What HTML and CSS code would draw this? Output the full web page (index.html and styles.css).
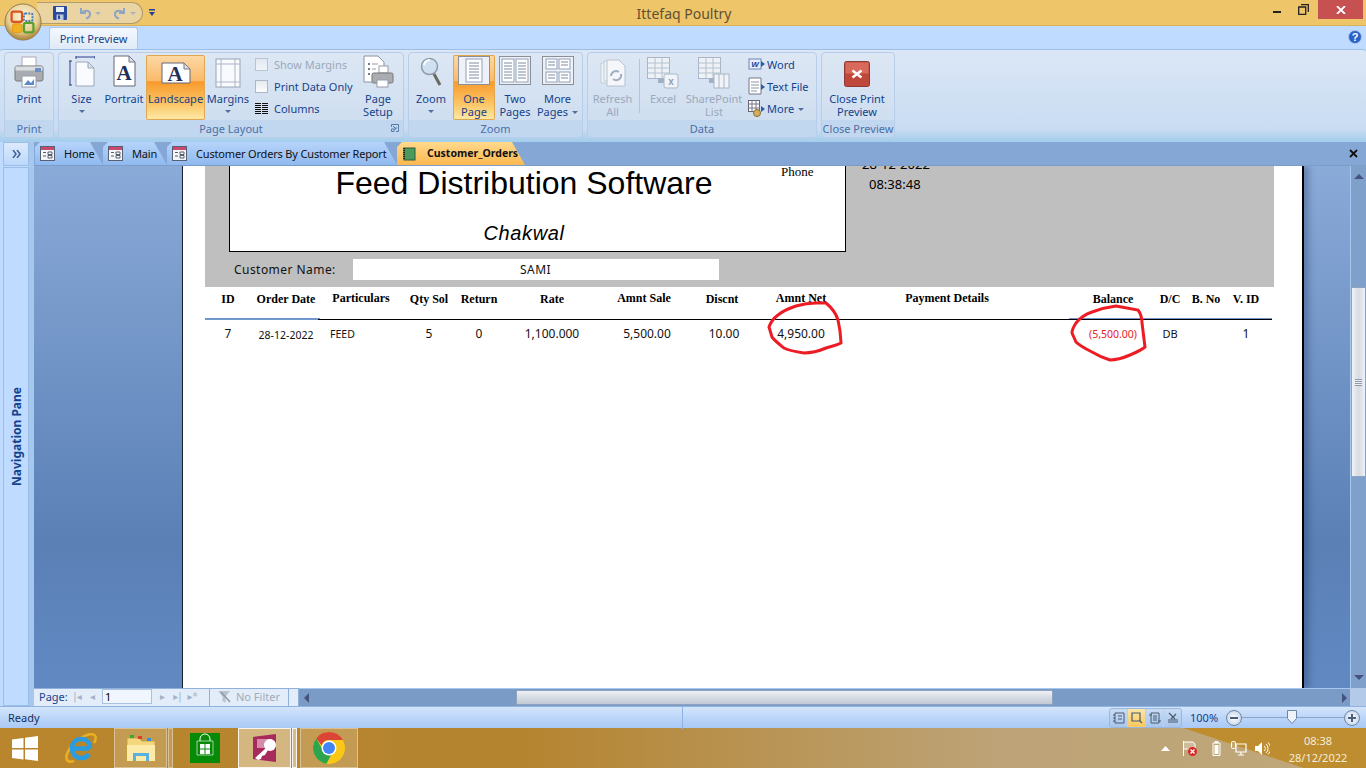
FILE: index.html
```html
<!DOCTYPE html>
<html lang="en">
<head>
<meta charset="utf-8">
<title>Ittefaq Poultry</title>
<link rel="stylesheet" href="styles.css">
</head>
<body>
<div class="app">
  <header class="titlebar">
    <div class="orb">
      <svg viewBox="0 0 40 40" width="38" height="38">
        <defs>
          <radialGradient id="orbg" cx="50%" cy="35%" r="60%"><stop offset="0" stop-color="#fff4d8"/><stop offset=".7" stop-color="#e8cf96"/><stop offset="1" stop-color="#b58f45"/></radialGradient>
        </defs>
        <circle cx="20" cy="20" r="19" fill="url(#orbg)" stroke="#8f7a4d"/>
        <rect x="8" y="9" width="11" height="11" rx="2" fill="none" stroke="#d9541e" stroke-width="2.4"/>
        <rect x="21" y="11" width="9" height="8" rx="1.5" fill="none" stroke="#3f7fc0" stroke-width="2" stroke-dasharray="2 1.2"/>
        <rect x="9" y="22" width="10" height="9" rx="1.5" fill="#f0b020" stroke="#e89a10"/>
        <rect x="21" y="21" width="10" height="10" rx="2" fill="none" stroke="#58a02f" stroke-width="2.4"/>
      </svg>
    </div>
    <div class="qat">
      <svg viewBox="0 0 14 14" width="14" height="14"><rect width="14" height="14" rx="1" fill="#2c4a9c"/><rect x="3" y="1" width="8" height="5" fill="#e8eef8"/><rect x="3.500" y="8.500" width="7" height="5.500" fill="#b9c6dc"/><rect x="5" y="9.500" width="2" height="3.500" fill="#2c4a9c"/></svg>
      <svg class="q-undo" viewBox="0 0 14 14" width="14" height="14"><path d="M3 2v5h5M3.500 7C6 3.500 12 4 12 8c0 2.500-2 4-4 4.500" fill="none" stroke="#8ea4c4" stroke-width="2"/></svg>
      <i class="q-caret"></i>
      <svg class="q-redo" viewBox="0 0 14 14" width="14" height="14"><path d="M11 2v5H6M10.500 7C8 3.500 2 4 2 8c0 2.500 2 4 4 4.500" fill="none" stroke="#8ea4c4" stroke-width="2"/></svg>
      <i class="q-caret"></i>
    </div>
    <svg class="q-more" viewBox="0 0 7 8" width="7" height="8"><path d="M0 0h6v1.500H0zM0 3h6L3 7z" fill="#23448c"/></svg>
    <div class="app-title">Ittefaq Poultry</div>
    <div class="win">
      <i class="w-min"></i>
      <svg class="w-res" viewBox="0 0 11 11" width="11" height="11"><path d="M3 .7h7.300V8M.7 3h7v7.300h-7z" fill="none" stroke="#222" stroke-width="1.300"/></svg>
      <div class="win-close"><svg viewBox="0 0 10 8" width="10" height="8"><path d="M1 0l8 8M9 0L1 8" stroke="#fff" stroke-width="1.800"/></svg></div>
    </div>
  </header>

  <div class="tabstrip">
    <div class="rtab">Print Preview</div>
    <svg class="help" viewBox="0 0 14 14" width="14" height="14"><circle cx="7" cy="7" r="6.500" fill="#2a62c8" stroke="#a8c4ec"/><text x="7" y="11" text-anchor="middle" class="help-q">?</text></svg>
  </div>

  <div class="ribbon">
    <section class="group g-print">
      <div class="g-body">
        <div class="rb w50">
          <div class="ic"><svg viewBox="0 0 30 34" width="30" height="34"><rect x="8" y="2" width="14" height="10" fill="#fff" stroke="#aab"/><rect x="1" y="11" width="28" height="15" rx="2" fill="#a9adb2" stroke="#777"/><rect x="1.500" y="11.500" width="27" height="4" fill="#dcdfe2"/><rect x="21" y="13" width="6" height="4" fill="#6c8fc0"/><rect x="8" y="21" width="14" height="11" fill="#fff" stroke="#99a"/><path d="M10 30l4-5 3 3 3-4v6z" fill="#5c88cc"/></svg></div>
          <span>Print</span>
        </div>
      </div>
      <footer>Print</footer>
    </section>

    <section class="group g-layout">
      <div class="g-body">
        <div class="rb w-size">
          <div class="ic"><svg viewBox="0 0 26 32" width="26" height="32"><path d="M7 1h19M7 0v3M26 0v3M1 5v24M0 5h3M0 29h3" stroke="#2a3f8c" fill="none"/><path d="M7 6h12l6 6v18H7z" fill="#fafbfe" stroke="#9aa7bb"/><path d="M19 6v6h6z" fill="#dde2ea" stroke="#9aa7bb"/></svg></div>
          <span>Size</span><i class="caret"></i>
        </div>
        <div class="rb w-portrait">
          <div class="ic"><svg viewBox="0 0 24 32" width="24" height="32"><path d="M2 1h15l6 6v24H2z" fill="#fff" stroke="#667"/><path d="M17 1v6h6z" fill="#dde2ea" stroke="#778"/><text x="12" y="25" text-anchor="middle" class="big-a">A</text></svg></div>
          <span>Portrait</span>
        </div>
        <div class="rb w-land active">
          <div class="ic"><svg viewBox="0 0 30 24" width="30" height="24"><path d="M1 3h22l6 6v14H1z" fill="#fff" stroke="#667"/><path d="M23 3v6h6z" fill="#dde2ea" stroke="#778"/><text x="14" y="21" text-anchor="middle" class="big-a">A</text></svg></div>
          <span>Landscape</span>
        </div>
        <div class="rb w-margin">
          <div class="ic"><svg viewBox="0 0 26 30" width="26" height="30"><rect x="1" y="1" width="24" height="28" fill="#f8fafe" stroke="#9aa4b4"/><path d="M6 1v28M20 1v28M1 6h24M1 24h24" stroke="#aab6c8" fill="none"/></svg></div>
          <span>Margins</span><i class="caret"></i>
        </div>
        <div class="opts">
          <div class="opt off"><i class="cb"></i><span>Show Margins</span></div>
          <div class="opt"><i class="cb"></i><span>Print Data Only</span></div>
          <div class="opt"><svg class="col-ic" viewBox="0 0 13 11" width="13" height="11"><path d="M0 .5h6M7 .5h6M0 2.500h6M7 2.500h6M0 4.500h6M7 4.500h6M0 6.500h6M7 6.500h6M0 8.500h6M7 8.500h6M0 10.500h6M7 10.500h6" stroke="#111"/></svg><span>Columns</span></div>
        </div>
        <div class="rb w-setup">
          <div class="ic"><svg viewBox="0 0 31 34" width="31" height="34"><path d="M1 1h14l6 6v20H1z" fill="#fff" stroke="#8894a8"/><path d="M5 9h2M5 14h2M5 19h2" stroke="#456" stroke-width="1.500"/><path d="M9 9h6M9 14h4M9 19h4" stroke="#99a"/><rect x="16" y="11" width="9" height="7" fill="#fff" stroke="#99a"/><rect x="9" y="18" width="21" height="10" rx="1.500" fill="#a9adb2" stroke="#777"/><rect x="14" y="25" width="11" height="7" fill="#fff" stroke="#99a"/></svg></div>
          <span>Page<br>Setup</span>
        </div>
      </div>
      <footer>Page Layout<svg class="launch" viewBox="0 0 8 8" width="8" height="8"><path d="M.5 3V.5H7.500V7.500H5M2 2l3 3M5 3v2H3M.5 5h2.500v2.500H.5z" fill="none" stroke="#5b7aa8"/></svg></footer>
    </section>

    <section class="group g-zoom">
      <div class="g-body">
        <div class="rb w-zoom">
          <div class="ic"><svg viewBox="0 0 22 30" width="22" height="30"><circle cx="9.500" cy="9.500" r="8" fill="#cfe0f2" stroke="#8d9aa8" stroke-width="1.500"/><path d="M4 8a6 6 0 0 1 6-5" stroke="#fff" stroke-width="2" fill="none"/><path d="M14 17l6 11" stroke="#6b6a60" stroke-width="3"/></svg></div>
          <span>Zoom</span><i class="caret"></i>
        </div>
        <div class="rb w-one active">
          <div class="ic"><svg viewBox="0 0 32 29" width="32" height="29"><rect x=".5" y=".5" width="31" height="28" fill="#eef2f8" stroke="#8a8f98"/><rect x="8" y="3" width="16" height="23" fill="#fff" stroke="#8fa0b8"/><path d="M11 7h10M11 10h10M11 13h10M11 16h10M11 19h10M11 22h10" stroke="#7f8ba0"/></svg></div>
          <span>One<br>Page</span>
        </div>
        <div class="rb w-two">
          <div class="ic"><svg viewBox="0 0 32 29" width="32" height="29"><rect x=".5" y=".5" width="31" height="28" fill="#eef2f8" stroke="#8a8f98"/><rect x="3" y="3" width="12" height="23" fill="#fff" stroke="#8fa0b8"/><rect x="17" y="3" width="12" height="23" fill="#fff" stroke="#8fa0b8"/><path d="M5 7h8M5 10h8M5 13h8M5 16h8M5 19h8M5 22h8M19 7h8M19 10h8M19 13h8M19 16h8M19 19h8M19 22h8" stroke="#7f8ba0"/></svg></div>
          <span>Two<br>Pages</span>
        </div>
        <div class="rb w-more">
          <div class="ic"><svg viewBox="0 0 32 29" width="32" height="29"><rect x=".5" y=".5" width="31" height="28" fill="#eef2f8" stroke="#8a8f98"/><rect x="4" y="3" width="11" height="10" fill="#fff" stroke="#8fa0b8"/><rect x="17" y="3" width="11" height="10" fill="#fff" stroke="#8fa0b8"/><rect x="4" y="16" width="11" height="10" fill="#fff" stroke="#8fa0b8"/><rect x="17" y="16" width="11" height="10" fill="#fff" stroke="#8fa0b8"/><path d="M6 6h7M6 9h7M19 6h7M19 9h7M6 19h7M6 22h7M19 19h7M19 22h7" stroke="#7f8ba0"/></svg></div>
          <span>More<br>Pages<i class="caret inline"></i></span>
        </div>
      </div>
      <footer>Zoom</footer>
    </section>

    <section class="group g-data">
      <div class="g-body">
        <div class="rb w-refresh off">
          <div class="ic"><svg viewBox="0 0 26 28" width="26" height="28"><path d="M1 4h12v20H1z" fill="#eef2f7" stroke="#c2ccd8"/><path d="M4 2h12v20H4z" fill="#eef2f7" stroke="#c2ccd8"/><path d="M7 1h12l6 6v20H7z" fill="#f4f6fa" stroke="#b8c2d0"/><path d="M11 17a5 5 0 0 1 8-4M21 15a5 5 0 0 1-8 5" fill="none" stroke="#9fb0c4" stroke-width="2"/></svg></div>
          <span>Refresh<br>All</span>
        </div>
        <i class="sep"></i>
        <div class="rb w-excel off">
          <div class="ic"><svg viewBox="0 0 32 32" width="32" height="32"><rect x=".5" y=".5" width="22" height="21" fill="#eef2f7" stroke="#a9b6c6"/><path d="M.5 6h22M.5 11h22M.5 16h22M8 .5v21M15 .5v21" stroke="#b4c0ce"/><path d="M6 19l5 5 0-3h6v5h-6v-2z" fill="#9fb0c4"/><rect x="17" y="17" width="14" height="14" rx="2" fill="#f0f3f7" stroke="#a9b6c6"/><text x="24" y="28" text-anchor="middle" class="mini-x">x</text></svg></div>
          <span>Excel</span>
        </div>
        <div class="rb w-share off">
          <div class="ic"><svg viewBox="0 0 32 32" width="32" height="32"><rect x=".5" y=".5" width="22" height="21" fill="#eef2f7" stroke="#a9b6c6"/><path d="M.5 6h22M.5 11h22M.5 16h22M8 .5v21M15 .5v21" stroke="#b4c0ce"/><path d="M6 19l5 5 0-3h6v5h-6v-2z" fill="#9fb0c4"/><rect x="16" y="17" width="15" height="14" fill="#f0f3f7" stroke="#a9b6c6"/><path d="M21 17v14M26 17v14" stroke="#a9b6c6"/></svg></div>
          <span>SharePoint<br>List</span>
        </div>
        <div class="opts data-opts">
          <div class="opt"><svg class="s-ic" viewBox="0 0 17 14" width="17" height="14"><rect x="1" y="2" width="12" height="10" fill="#e8eefb" stroke="#6d83b8"/><text x="7" y="10" text-anchor="middle" class="mini-w">W</text><path d="M13 4l4 3-4 3z" fill="#2a5ba8"/></svg><span>Word</span></div>
          <div class="opt"><svg class="s-ic" viewBox="0 0 17 18" width="17" height="18"><path d="M1 1h12v16H1z" fill="#fff" stroke="#778"/><path d="M3 5h8M3 8h8M3 11h8M3 14h6" stroke="#8a95a8"/><path d="M13 7l4 3-4 3z" fill="#2a5ba8"/></svg><span>Text File</span></div>
          <div class="opt"><svg class="s-ic" viewBox="0 0 17 17" width="17" height="17"><rect x=".5" y=".5" width="11" height="11" fill="#fff" stroke="#667"/><path d="M.5 4h11M.5 8h11M4 .5v11M8 .5v11" stroke="#778"/><ellipse cx="9" cy="13" rx="3.500" ry="3.500" fill="#d0b060" stroke="#8a7030"/><path d="M13 6l4 3-4 3z" fill="#2a5ba8"/></svg><span>More<i class="caret inline"></i></span></div>
        </div>
      </div>
      <footer>Data</footer>
    </section>

    <section class="group g-close">
      <div class="g-body">
        <div class="rb w-closep">
          <div class="ic"><svg viewBox="0 0 26 26" width="26" height="26"><rect x=".5" y=".5" width="25" height="25" rx="2" fill="#c0483a" stroke="#8c3a34"/><rect x="1.500" y="1.500" width="23" height="11" fill="#d86a5c"/><path d="M8.500 9.500l9 7M17.500 9.500l-9 7" stroke="#fff" stroke-width="2.500"/></svg></div>
          <span>Close Print<br>Preview</span>
        </div>
      </div>
      <footer>Close Preview</footer>
    </section>
  </div>

  <main class="work">
    <aside class="nav">
      <div class="nav-top"><svg viewBox="0 0 9 8" width="9" height="8"><path d="M1 0l3 4-3 4M5 0l3 4-3 4" fill="none" stroke="#3f5f98" stroke-width="1.500"/></svg></div>
      <div class="nav-pane"><span>Navigation Pane</span></div>
    </aside>
    <div class="docs">
      <div class="doctabs">
        <div class="dtab"><svg class="form-ic" viewBox="0 0 15 15" width="15" height="15"><use href="#formicon"/></svg><span>Home</span></div>
        <div class="dtab"><svg class="form-ic" viewBox="0 0 15 15" width="15" height="15"><use href="#formicon"/></svg><span>Main</span></div>
        <div class="dtab wide"><svg class="form-ic" viewBox="0 0 15 15" width="15" height="15"><use href="#formicon"/></svg><span>Customer Orders By Customer Report</span></div>
        <div class="dtab cur"><svg viewBox="0 0 13 14" width="13" height="14"><rect x="1" y="1" width="11" height="12" fill="#4a9a5c" stroke="#2c5c38"/><path d="M1 1v12" stroke="#222" stroke-dasharray="1 1" stroke-width="2"/></svg><span>Customer_Orders</span></div>
        <svg class="doc-x" viewBox="0 0 9 9" width="9" height="9"><path d="M1 1l7 7M8 1L1 8" stroke="#111" stroke-width="1.800"/></svg>
      </div>
      <div class="stage">
        <div class="viewport">
          <div class="page">
            <div class="band">
              <div class="band-top">
                <div class="titlebox">
                  <div class="tb-main">
                    <div class="co-name">Feed Distribution Software</div>
                    <div class="co-city">Chakwal</div>
                  </div>
                  <div class="co-phone">Phone</div>
                </div>
                <div class="stamp">
                  <div class="st-date">28-12-2022</div>
                  <div class="st-time">08:38:48</div>
                </div>
              </div>
              <div class="cust">
                <div class="cust-label">Customer Name:</div>
                <div class="cust-value">SAMI</div>
              </div>
            </div>
            <div class="cols head">
              <div>ID</div><div>Order Date</div><div class="h-up">Particulars</div><div>Qty Sol</div><div>Return</div><div>Rate</div><div class="h-up">Amnt Sale</div><div>Discnt</div><div class="h-up">Amnt Net</div><div class="h-up">Payment Details</div><div></div><div>Balance</div><div>D/C</div><div>B. No</div><div>V. ID</div>
            </div>
            <div class="rule"></div>
            <div class="cols row">
              <div>7</div><div class="c-date">28-12-2022</div><div class="c-part">FEED</div><div>5</div><div>0</div><div>1,100.000</div><div class="c-sale">5,500.00</div><div class="c-disc">10.00</div><div>4,950.00</div><div></div><div></div><div class="c-neg">(5,500.00)</div><div class="c-dc">DB</div><div></div><div>1</div>
            </div>
            <svg class="ring ring-net" viewBox="766 300 78 56" width="78" height="56"><path d="M826 303C832 308 836 313 838 320L840 331L841 343C836 346 831 346 826 348C819 351 811 353 804 353C797 352 790 351 784 348C779 344 775 341 772 337L769 327C771 321 774 318 778 315C783 311 790 308 796 306C803 304 810 303 816 303z" fill="none" stroke="#ed1c24" stroke-width="3"/></svg>
            <svg class="ring ring-bal" viewBox="1069 303 79 59" width="79" height="59"><path d="M1116 306L1138 310C1141 314 1142 319 1142 323L1145 347C1140 351 1135 353 1130 355C1123 358 1116 360 1110 360C1103 358 1097 355 1092 352C1086 349 1080 346 1076 342L1072 333C1072 329 1074 326 1076 323C1080 318 1086 314 1092 312C1100 309 1108 307 1116 306z" fill="none" stroke="#ed1c24" stroke-width="3"/></svg>
          </div>
        </div>
        <div class="vscroll">
          <i class="v-up"></i>
          <div class="v-thumb"><i></i></div>
          <i class="v-down"></i>
        </div>
      </div>
      <div class="hrow">
        <div class="pager">
          <span class="p-label">Page:</span>
          <span class="p-nav">|◂</span><span class="p-nav">◂</span>
          <div class="p-input">1</div>
          <span class="p-nav">▸</span><span class="p-nav">▸|</span><span class="p-nav">▸*</span>
        </div>
        <div class="nofilter"><svg viewBox="0 0 14 12" width="14" height="12"><path d="M0 0h12L7.500 5.500V12l-3-2V5.500z" fill="#b9c2cf"/><path d="M3 1l9 10" stroke="#8d97a6" stroke-width="1.500"/></svg><span>No Filter</span></div>
        <i class="h-stub"></i>
        <div class="htrack">
          <i class="h-left"></i>
          <div class="h-thumb"></div>
          <i class="h-right"></i>
        </div>
        <i class="corner"></i>
      </div>
    </div>
  </main>

  <div class="status">
    <span class="st-ready">Ready</span>
    <i class="st-div"></i>
    <div class="st-views">
      <div class="vw"><svg viewBox="0 0 12 12" width="12" height="12"><path d="M2 1h9v10H2zM5 4h4M5 7h4M0 3h2M0 6h2M0 9h2" fill="none" stroke="#4a5a70"/></svg></div>
      <div class="vw on"><svg viewBox="0 0 12 12" width="12" height="12"><path d="M1 1h8v8H1zM8 8l3 3" fill="none" stroke="#4a5a70" stroke-width="1.200"/></svg></div>
      <div class="vw"><svg viewBox="0 0 12 12" width="12" height="12"><path d="M2 1h8v10H2zM4 4h4M4 6h4M4 8h4M0 3h3M9 9h3" fill="none" stroke="#4a5a70"/></svg></div>
      <div class="vw"><svg viewBox="0 0 12 12" width="12" height="12"><path d="M1 10h10M1 8h10M2 1l6 6M9 2L4 7" fill="none" stroke="#4a5a70" stroke-width="1.200"/></svg></div>
    </div>
    <span class="st-zoom">100%</span>
    <div class="slider">
      <i class="z-btn minus"></i>
      <div class="z-track"><svg class="z-knob" viewBox="0 0 10 14" width="10" height="14"><path d="M.5.500h9v8l-4.500 5-4.500-5z" fill="#eef3fa" stroke="#6d86a8"/></svg></div>
      <i class="z-btn plus"></i>
    </div>
  </div>

  <footer class="taskbar">
    <svg class="tb-start" viewBox="0 0 26 25" width="26" height="25"><path d="M0 3.500L11.500 2v10H0zM13 1.800L26 0v12H13zM0 13.500h11.500v10L0 22zM13 13.500h13V25L13 23.300z" fill="#fff"/></svg>
    <svg class="tb-ie" viewBox="0 0 32 30" width="32" height="30"><path d="M9 28C3 30 0 27 2 21 5 12 17 2 26 1c5 0 6 4 3 9" fill="none" stroke="#e8b020" stroke-width="2.500"/><path d="M8 15.500h17M25 15.500C25 9 21 6 16.500 6 11 6 7 10 7 15.500S11 25 16.500 25c3.500 0 6-1.500 7.500-4" fill="none" stroke="#2a9ce0" stroke-width="4.500"/></svg>
    <div class="tb-btn t-exp"><svg viewBox="0 0 32 28" width="32" height="28"><path d="M2 4h12l3 3h13v20H2z" fill="#f4d67c" stroke="#c8a040"/><rect x="5" y="1" width="4" height="3" fill="#38a838"/><rect x="13" y="2" width="4" height="3" fill="#d84030"/><rect x="22" y="4" width="4" height="3" fill="#3090e0"/><rect x="2" y="11" width="28" height="16" fill="#fbeaa8"/><path d="M8 27V19h16v8h-3v-5H11v5z" fill="#5ab0e0"/></svg></div>
    <i class="tb-stub"></i>
    <svg class="tb-store" viewBox="0 0 30 30" width="30" height="30"><rect width="30" height="30" fill="#078a07"/><path d="M10 8V6a5 5 0 0 1 10 0v2" fill="none" stroke="#fff"/><path d="M7 8h16v14H7z" fill="none" stroke="#fff" stroke-opacity=".6"/><path d="M10 11h4.500v4.500H10zM15.500 11H20v4.500h-4.500zM10 16.500h4.500V21H10zM15.500 16.500H20V21h-4.500z" fill="#fff"/></svg>
    <div class="tb-btn t-acc"><svg viewBox="0 0 30 28" width="30" height="28"><path d="M3 3L26 0v28L3 25z" fill="#a62a5c"/><path d="M7 5h15v5h-6v4h-9z" fill="#d58caa"/><circle cx="20" cy="11" r="6" fill="#fff"/><path d="M16 14L5 24l3 2 3-1 1-3 3-1 3-5z" fill="#fff"/></svg></div>
    <i class="tb-stub lit"></i>
    <div class="tb-btn t-chrome"><svg viewBox="0 0 32 32" width="32" height="32"><circle cx="16" cy="16" r="16" fill="#f9c816"/><path d="M16 0a16 16 0 0 1 13.900 8H16a8 8 0 0 0-7.500 5.300L3.200 6.400A16 16 0 0 1 16 0z" fill="#dc4437"/><path d="M3.200 6.400L9 16.500a8 8 0 0 0 9 6.500l-4.500 8.800A16 16 0 0 1 3.200 6.400z" fill="#2da44e"/><circle cx="16" cy="16" r="7.500" fill="#fff"/><circle cx="16" cy="16" r="6" fill="#4285f4"/></svg></div>
    <div class="tray">
      <svg class="tr-up" viewBox="0 0 9 5" width="9" height="5"><path d="M0 5l4.500-5L9 5z" fill="#fff"/></svg>
      <svg class="tr-flag" viewBox="0 0 15 15" width="15" height="15"><path d="M1.500 0v15M2 1h9l2 2v5H2" fill="#fff" fill-opacity=".25" stroke="#fff"/><circle cx="10.500" cy="10.500" r="4.500" fill="#d82828"/><path d="M8.500 8.500l4 4M12.500 8.500l-4 4" stroke="#fff" stroke-width="1.300"/></svg>
      <svg class="tr-bat" viewBox="0 0 9 15" width="9" height="15"><path d="M1 2h7v12.500H1zM3 .5h3V2H3z" fill="none" stroke="#fff"/><rect x="2.500" y="4" width="4" height="9" fill="#fff"/></svg>
      <svg class="tr-net" viewBox="0 0 16 15" width="16" height="15"><path d="M5 3h10v8H5zM10 11v3M7 14h6" fill="none" stroke="#fff" stroke-width="1.200"/><rect x=".5" y=".5" width="4" height="7" rx="1" fill="#c5a96e" stroke="#fff"/></svg>
      <svg class="tr-vol" viewBox="0 0 16 15" width="16" height="15"><path d="M1 5h3l4-4v13l-4-4H1z" fill="#fff"/><path d="M10 5a3 3 0 0 1 0 5M12 3a6 6 0 0 1 0 9M14 1.500a8 8 0 0 1 0 12" fill="none" stroke="#fff"/></svg>
      <div class="clock"><div>08:38</div><div>28/12/2022</div></div>
    </div>
  </footer>
</div>
<svg class="defs" width="0" height="0"><defs><g id="formicon"><rect x=".5" y=".5" width="14" height="14" fill="#f4f6fa" stroke="#5a6070"/><rect x="1" y="1" width="13" height="3" fill="#c84870"/><path d="M3 6.500h3M3 10h3M8 6h4v2.500H8zM8 9.500h4V12H8z" fill="none" stroke="#56606e"/></g></defs></svg>
</body>
</html>
```

FILE: styles.css
```css
* { box-sizing: border-box; }
html, body { margin: 0; padding: 0; width: 1366px; height: 768px; overflow: hidden; }
body { font: 11px/13px "Noto Sans", "Open Sans", sans-serif; color: #15428b; background: #bfdbff; }
i { display: block; font-style: normal; }
svg { display: block; flex: none; }
.defs { position: absolute; }
.app { width: 1366px; height: 768px; display: flex; flex-direction: column; }

/* title bar */
.titlebar { height: 26px; flex: none; background: #eec569; border-bottom: 1px solid #d9b25c; display: flex; align-items: flex-start; position: relative; }
.orb { position: absolute; left: 4px; top: 3px; z-index: 3; }
.qat { margin: 2px 0 0 37px; width: 106px; height: 22px; border: 1px solid #b59c68; border-left: 0; border-radius: 0 11px 11px 0; background: #e9d4a2; display: flex; align-items: center; padding-left: 16px; gap: 3px; }
.q-undo { margin-left: 8px; }
.q-redo { margin-left: 6px; }
.q-caret { width: 0; height: 0; border: 3px solid transparent; border-top-color: #a9b3bf; margin: 3px 3px 0 0; }
.q-more { margin: 9px 0 0 6px; }
.app-title { position: absolute; left: 0; right: 0; top: 4px; text-align: center; font-size: 14px; line-height: 19px; color: #5f5034; padding-left: 2px; }
.win { margin-left: auto; display: flex; align-items: flex-start; }
.w-min { width: 8px; height: 2px; background: #222; margin: 11px 0 0; }
.w-res { margin: 4px 0 0 17px; }
.win-close { width: 45px; height: 19px; margin: 0 3px 0 9px; background: #c75050; display: flex; align-items: center; justify-content: center; }

/* tab strip */
.tabstrip { height: 23px; flex: none; display: flex; align-items: flex-end; background: #bfdbff; padding-left: 49px; position: relative; }
.rtab { width: 89px; height: 22px; background: linear-gradient(#f3f8fe, #dfeaf7); border: 1px solid #a9c8ec; border-bottom: 0; border-radius: 3px 3px 0 0; text-align: center; line-height: 22px; }
.help { position: absolute; right: 4px; top: 4px; }
.help-q { font: bold 11px "Liberation Sans", sans-serif; fill: #fff; }

/* ribbon */
.ribbon { height: 91px; flex: none; padding: 2px 0 0 4px; background: linear-gradient(#dbe7f6, #c9dcf2 88%, #a9cfec); border-top: 1px solid #9dbfe6; border-radius: 3px 3px 0 0; display: flex; gap: 4px; }
.group { height: 86px; border: 1px solid #b7cde8; border-radius: 4px; display: flex; flex-direction: column; background: linear-gradient(#dde7f4, #cbdcef); }
.group footer { height: 17px; flex: none; background: #c1d7ef; border-radius: 0 0 3px 3px; text-align: center; line-height: 17px; color: #4c6fa6; position: relative; }
.g-body { height: 67px; flex: none; display: flex; padding-top: 2px; }
.launch { position: absolute; right: 4px; top: 4px; }
.g-print { width: 50px; }
.g-layout { width: 346px; }
.g-zoom { width: 175px; }
.g-data { width: 230px; }
.g-close { width: 74px; }
.rb { height: 65px; display: flex; flex-direction: column; align-items: center; text-align: center; flex: none; white-space: nowrap; }
.rb .ic { height: 37px; display: flex; align-items: flex-end; padding-bottom: 3px; justify-content: center; flex: none; }
.w50 { width: 48px; }
.w-size { width: 45px; }
.w-portrait { width: 40px; margin-right: 2px; }
.w-land { width: 59px; }
.w-margin { width: 46px; }
.w-setup { width: 44px; }
.w-zoom { width: 44px; }
.w-one { width: 42px; }
.w-two { width: 40px; }
.w-more { width: 45px; }
.w-refresh { width: 49px; }
.w-excel { width: 46px; }
.w-share { width: 56px; }
.w-closep { width: 70px; }
.rb.w-size .ic { padding-bottom: 4px; }
.rb.w-portrait .ic { padding-bottom: 5px; }
.rb.w-land .ic { padding-bottom: 8px; }
.rb.w-margin .ic { padding-bottom: 4px; }
.rb.w-zoom .ic { padding-bottom: 5px; }
.rb.w-one .ic, .rb.w-two .ic, .rb.w-more .ic { padding-bottom: 7px; }
.rb.w-refresh .ic { padding-bottom: 5px; }
.rb.w-closep .ic { padding-bottom: 5px; }
.active { background: linear-gradient(#fcd9a6 0, #fbb96b 40%, #f89a2c 41%, #fbc565 75%, #fdeaa9 100%); box-shadow: inset 0 0 0 1px #e0a84e; border-radius: 2px; color: #15428b; }
.off { color: #9aa9bc; }
.caret { width: 0; height: 0; border: 3px solid transparent; border-top-color: #506f9f; margin-top: 5px; }
.caret.inline { display: inline-block; margin: 0 0 -1px 4px; }
.opts { width: 105px; height: 66px; flex: none; margin-top: -2px; padding-left: 4px; display: flex; flex-direction: column; }
.opt { height: 22px; display: flex; align-items: center; gap: 6px; white-space: nowrap; }
.cb { width: 13px; height: 13px; border: 1px solid #a9b7c9; background: linear-gradient(#e6eaef, #fbfcfd); }
.off .cb { opacity: .7; }
.sep { width: 1px; height: 54px; margin: 4px 0 0 2px; background: #b4c5db; flex: none; }
.data-opts { width: 70px; padding-left: 6px; }
.data-opts .opt { gap: 2px; }

/* workspace */
.work { flex: 1; min-height: 0; display: flex; background: #bfdbff; border-top: 2px solid #a6cfee; }
.nav { width: 34px; flex: none; display: flex; flex-direction: column; padding-left: 3px; border-right: 5px solid #a6c8ef; }
.nav-top { height: 24px; flex: none; background: linear-gradient(#dceafc, #bcd8fb); border: 1px solid #9cbde6; display: flex; align-items: center; justify-content: center; }
.nav-pane { flex: 1; margin-top: 1px; background: #bfdbff; border: 1px solid #9cbde6; display: flex; align-items: center; justify-content: center; }
.nav-pane span { writing-mode: vertical-rl; transform: rotate(180deg); font-size: 12px; font-weight: 700; white-space: nowrap; }
.docs { flex: 1; min-width: 0; display: flex; flex-direction: column; }
.doctabs { height: 24px; flex: none; background: #85a7d5; display: flex; align-items: flex-end; padding-left: 1px; position: relative; border-bottom: 1px solid #7d9dc9; }
.dtab { height: 23px; width: 68px; display: flex; align-items: center; gap: 9px; padding-left: 5px; background: linear-gradient(#b7d4fb, #8fb9ef); clip-path: polygon(0 5px, 5px 0, calc(100% - 13px) 0, 100% 100%, 0 100%); color: #111; white-space: nowrap; letter-spacing: -.17px; }
.dtab:nth-child(2) { width: 64px; }
.dtab.wide { width: 230px; }
.dtab.cur { width: 128px; gap: 11px; padding-left: 6px; background: linear-gradient(#ffd98c, #fbb84f); font-weight: 700; font-size: 10.5px; letter-spacing: 0; }
.doc-x { margin: 0 8px 7px auto; }

.stage { flex: 1; min-height: 0; display: flex; }
.viewport { flex: 1; min-width: 0; overflow: hidden; padding-left: 148px; background: linear-gradient(#8aaad8, #5a80b6 72%, #6289c2); }
.page { width: 1122px; height: 100%; background: #fff; border-left: 1px solid #1a2230; border-right: 2px solid #000; padding-left: 22px; position: relative; box-shadow: 5px 0 6px rgba(20,40,80,.3); }
.band { width: 1069px; height: 121px; background: #bfbfbf; overflow: hidden; }
.band-top { display: flex; height: 86px; padding-left: 24px; align-items: flex-start; }
.titlebox { width: 617px; height: 86px; background: #fff; border: 1px solid #000; border-top: 0; display: flex; flex: none; }
.tb-main { width: 520px; padding-left: 68px; color: #000; font-family: "Liberation Sans", Arial, sans-serif; text-align: center; flex: none; }
.co-name { font-size: 32px; line-height: 34px; white-space: nowrap; }
.co-city { font-size: 20px; line-height: 24px; font-style: italic; margin-top: 21px; letter-spacing: .6px; }
.co-phone { font: 13px/12px "Liberation Serif", serif; color: #000; margin-left: 31px; }
.stamp { color: #000; font-size: 13px; line-height: 16px; padding-left: 16px; }
.st-date { margin-top: -10px; }
.st-time { margin: 4px 0 0 7px; }
.cust { display: flex; height: 21px; margin-top: 7px; padding-left: 29px; color: #111; font-size: 12px; line-height: 21px; letter-spacing: .45px; }
.cust-label { width: 119px; flex: none; }
.cust-value { width: 366px; background: #fff; text-align: center; padding-right: 1px; }

.cols { width: 1067px; display: grid; grid-template-columns: 46px 70px 80px 56px 44px 102px 82px 74px 84px 208px 20px 84px 30px 42px 38px; text-align: center; color: #000; white-space: nowrap; }
.head { height: 31px; font: bold 12px/24px "Liberation Serif", serif; }
.h-up { margin-top: -1px; }
.rule { width: 1067px; height: 2px; background:
  linear-gradient(90deg, #6f97cc 0 115px, transparent 115px 864px, #6f97cc 864px) top / 100% 1px no-repeat,
  linear-gradient(90deg, #6f97cc 0 113px, #000 113px) bottom / 100% 1px no-repeat; }
.row { height: 26px; padding-top: 1px; font-size: 12px; line-height: 26px; color: #111; }
.c-date { font-size: 10.5px; margin-top: 1px; }
.c-part { text-align: left; padding-left: 9px; font-size: 10.5px; }
.c-sale { padding-left: 6px; }
.c-disc { padding-left: 4px; }
.c-neg { color: #e8202a; font-size: 10.5px; }
.c-dc { font-size: 11px; }
.ring { position: absolute; }
.ring-net { left: 583px; top: 134px; }
.ring-bal { left: 886px; top: 137px; }

/* scrollbars */
.vscroll { width: 16px; flex: none; background: #7fa0ca; border-left: 1px solid #a6c8ef; display: flex; flex-direction: column; align-items: center; }
.v-up { width: 0; height: 0; border: 5px solid transparent; border-bottom-color: #44547c; border-top: 0; margin-top: 8px; }
.v-thumb { width: 15px; height: 190px; margin-top: 108px; background: linear-gradient(90deg, #f0f2f6, #d7dce3 50%, #eef1f5); border: 1px solid #8da3bf; display: flex; align-items: center; justify-content: center; border-radius: 1px; }
.v-thumb i { width: 7px; height: 7px; background: repeating-linear-gradient(#8a98ac 0 1px, #eef1f5 1px 2px); }
.v-down { width: 0; height: 0; border: 5px solid transparent; border-top-color: #44547c; border-bottom: 0; margin-top: auto; margin-bottom: 8px; }
.hrow { height: 18px; flex: none; display: flex; background: #bfdbff; }
.pager { width: 175px; display: flex; align-items: center; flex: none; padding: 0 0 2px 5px; background: #e3edf9; border-top: 1px solid #8fb0dc; color: #15428b; }
.p-label { width: 31px; flex: none; }
.p-nav { width: 15px; font: 10px/1 "DejaVu Sans", sans-serif; color: #a4b2c6; text-align: center; flex: none; white-space: nowrap; }
.p-input { width: 50px; height: 15px; margin: 0 3px 0 2px; border: 1px solid #a9c0df; background: #f0f6fd; color: #000; padding-left: 2px; line-height: 13px; flex: none; }
.nofilter { width: 80px; flex: none; display: flex; align-items: center; gap: 4px; padding: 0 0 2px 8px; background: #e3edf9; border: 1px solid #8fb0dc; border-width: 1px 1px 0; color: #a0acbc; }
.h-stub { width: 10px; flex: none; background: #e3edf9; border-top: 1px solid #8fb0dc; border-right: 1px solid #8fb0dc; }
.htrack { flex: 1; display: flex; align-items: center; background: #7a9bc6; border-top: 1px solid #a6c8ef; position: relative; }
.h-left { width: 0; height: 0; border: 5px solid transparent; border-right-color: #44547c; border-left: 0; margin-left: 5px; }
.h-thumb { width: 537px; height: 15px; margin-left: 207px; background: linear-gradient(#eef1f5, #d4dae2 55%, #c3cad4); border: 1px solid #8da3bf; border-radius: 1px; }
.h-right { width: 0; height: 0; border: 5px solid transparent; border-left-color: #44547c; border-right: 0; margin-left: auto; margin-right: 3px; }
.corner { width: 16px; flex: none; background: #b3cbe8; }

/* status */
.status { height: 22px; flex: none; display: flex; align-items: center; background: linear-gradient(#d4e5fb, #bcd6f9 50%, #a9c9f5); border-top: 1px solid #8fb3e0; padding-left: 8px; position: relative; }
.st-ready { color: #15305f; width: 674px; flex: none; }
.st-div { width: 1px; height: 22px; background: #8fb3e0; flex: none; }
.st-views { margin-left: 426px; width: 73px; height: 20px; display: flex; border: 1px solid #9ab8de; border-radius: 3px; background: linear-gradient(#c8dcf5, #a8c6ec); flex: none; }
.vw { flex: 1; display: flex; align-items: center; justify-content: center; border-right: 1px solid #bcd0e8; }
.vw:last-child { border: 0; }
.vw.on { background: linear-gradient(#fde6a8, #f9c85c); }
.st-zoom { margin-left: 8px; width: 36px; flex: none; color: #15428b; }
.slider { width: 134px; display: flex; align-items: center; flex: none; }
.z-btn { width: 16px; height: 16px; border-radius: 50%; border: 1px solid #6d86a8; background: radial-gradient(#fff, #b9cde6); flex: none; position: relative; }
.z-btn::before { content: ""; position: absolute; left: 3px; right: 3px; top: 6px; height: 2px; background: #4a5f80; }
.plus::after { content: ""; position: absolute; top: 3px; bottom: 3px; left: 6px; width: 2px; background: #4a5f80; }
.z-track { flex: 1; height: 1px; background: #8aa5c8; position: relative; }
.z-knob { position: absolute; left: 45px; top: -7px; }

/* taskbar */
.taskbar { height: 40px; flex: none; display: flex; align-items: center; color: #fff; background:
  linear-gradient(18.4deg, transparent 411px, #bd8d30 412px),
  linear-gradient(90deg, #b9862d 0, #b5842f 520px, #b8914e 720px, #bda377 1000px, #bfa779 1300px); }
.tb-start { margin-left: 12px; }
.tb-ie { margin-left: 27px; }
.tb-btn { height: 40px; display: flex; align-items: center; justify-content: center; flex: none; background: rgba(255,255,255,.18); border: 1px solid rgba(255,255,255,.38); }
.t-exp { width: 53px; margin-left: 17px; }
.tb-stub { width: 5px; height: 40px; margin-left: 1px; background: rgba(255,255,255,.18); border: 1px solid rgba(255,255,255,.38); flex: none; }
.tb-stub.lit { background: rgba(255,255,255,.45); border-color: rgba(255,255,255,.85); }
.tb-store { margin-left: 17px; }
.t-acc { width: 53px; margin-left: 18px; background: rgba(255,255,255,.4); border-color: rgba(255,255,255,.85); }
.t-chrome { width: 58px; margin-left: 3px; }
.tray { margin-left: auto; display: flex; align-items: center; }
.tr-up { margin-right: 12px; }
.tr-flag { margin-right: 15px; }
.tr-bat { margin-right: 10px; }
.tr-net { margin-right: 7px; }
.tr-vol { margin-right: 10px; }
.clock { width: 76px; margin-right: 10px; text-align: center; font-size: 11px; line-height: 17px; color: #f5ecd8; padding-top: 1px; }

.big-a { font: bold 21px "Liberation Serif", serif; fill: #1f2f5a; }
.mini-x { font: bold 10px "Liberation Sans", sans-serif; fill: #8fa0b4; }
.mini-w { font: bold italic 8px "Liberation Sans", sans-serif; fill: #1c3f90; }
```
